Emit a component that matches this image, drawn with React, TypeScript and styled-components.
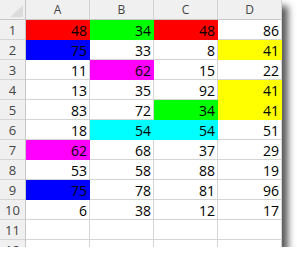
import styled, { createGlobalStyle } from 'styled-components';

type Fill = 'red' | 'green' | 'blue' | 'magenta' | 'cyan' | 'yellow' | '';

const fills: Record<string, string> = {
  red: '#ff0000',
  green: '#00ff00',
  blue: '#0000ff',
  magenta: '#ff00ff',
  cyan: '#00ffff',
  yellow: '#ffff00',
};

const data: [number | null, Fill][][] = [
  [[48, 'red'], [34, 'green'], [48, 'red'], [86, '']],
  [[75, 'blue'], [33, ''], [8, ''], [41, 'yellow']],
  [[11, ''], [62, 'magenta'], [15, ''], [22, '']],
  [[13, ''], [35, ''], [92, ''], [41, 'yellow']],
  [[83, ''], [72, ''], [34, 'green'], [41, 'yellow']],
  [[18, ''], [54, 'cyan'], [54, 'cyan'], [51, '']],
  [[62, 'magenta'], [68, ''], [37, ''], [29, '']],
  [[53, ''], [58, ''], [88, ''], [19, '']],
  [[75, 'blue'], [78, ''], [81, ''], [96, '']],
  [[6, ''], [38, ''], [12, ''], [17, '']],
  [[null, ''], [null, ''], [null, ''], [null, '']],
  [[null, ''], [null, ''], [null, ''], [null, '']],
];

const GlobalStyle = createGlobalStyle`
  body {
    margin: 0;
    background: #ffffff;
  }
`;

const Sheet = styled.div`
  width: 282px;
  height: 247px;
  overflow: hidden;
  display: grid;
  grid-template-columns: 26px repeat(4, 64px);
  grid-auto-rows: 20px;
  background: #ffffff;
  box-shadow: 6px 6px 7px rgba(0, 0, 0, 0.65);
  font-family: 'Open Sans', 'Liberation Sans', sans-serif;
`;

const Corner = styled.div`
  box-sizing: border-box;
  background: #f0f0f0;
  border-right: 1px solid #c6c6c6;
  border-bottom: 1px solid #c6c6c6;
  display: flex;
  align-items: flex-end;
  justify-content: flex-end;
  padding: 0 2px 2px 0;
`;

const ColHead = styled.div`
  box-sizing: border-box;
  background: #f0f0f0;
  border-right: 1px solid #d4d4d4;
  border-bottom: 1px solid #c6c6c6;
  display: flex;
  align-items: center;
  justify-content: center;
  font-size: 12px;
  color: #444444;
`;

const RowHead = styled.div`
  box-sizing: border-box;
  background: #f0f0f0;
  border-right: 1px solid #c6c6c6;
  border-bottom: 1px solid #d4d4d4;
  display: flex;
  align-items: center;
  justify-content: center;
  font-size: 13px;
  color: #444444;
`;

const Cell = styled.div<{ $fill: string }>`
  box-sizing: border-box;
  background: ${(p) => p.$fill || '#ffffff'};
  border-right: 1px solid ${(p) => p.$fill || '#d4d4d4'};
  border-bottom: 1px solid ${(p) => p.$fill || '#d4d4d4'};
  display: flex;
  align-items: center;
  justify-content: flex-end;
  padding: 1px 2px 0 0;
  font-size: 14px;
  color: #000000;
`;

export default function App() {
  return (
    <>
      <GlobalStyle />
      <Sheet>
        <Corner>
          <svg width="13" height="12" viewBox="0 0 13 12">
            <polygon points="13,0 13,12 0,12" fill="#dcdcdc" />
          </svg>
        </Corner>
        {['A', 'B', 'C', 'D'].map((c) => (
          <ColHead key={c}>{c}</ColHead>
        ))}
        {data.map((row, i) => [
          <RowHead key={`r${i}`}>{i + 1}</RowHead>,
          ...row.map(([v, f], j) => (
            <Cell key={`${i}-${j}`} $fill={f ? fills[f] : ''}>
              {v}
            </Cell>
          )),
        ])}
      </Sheet>
    </>
  );
}
